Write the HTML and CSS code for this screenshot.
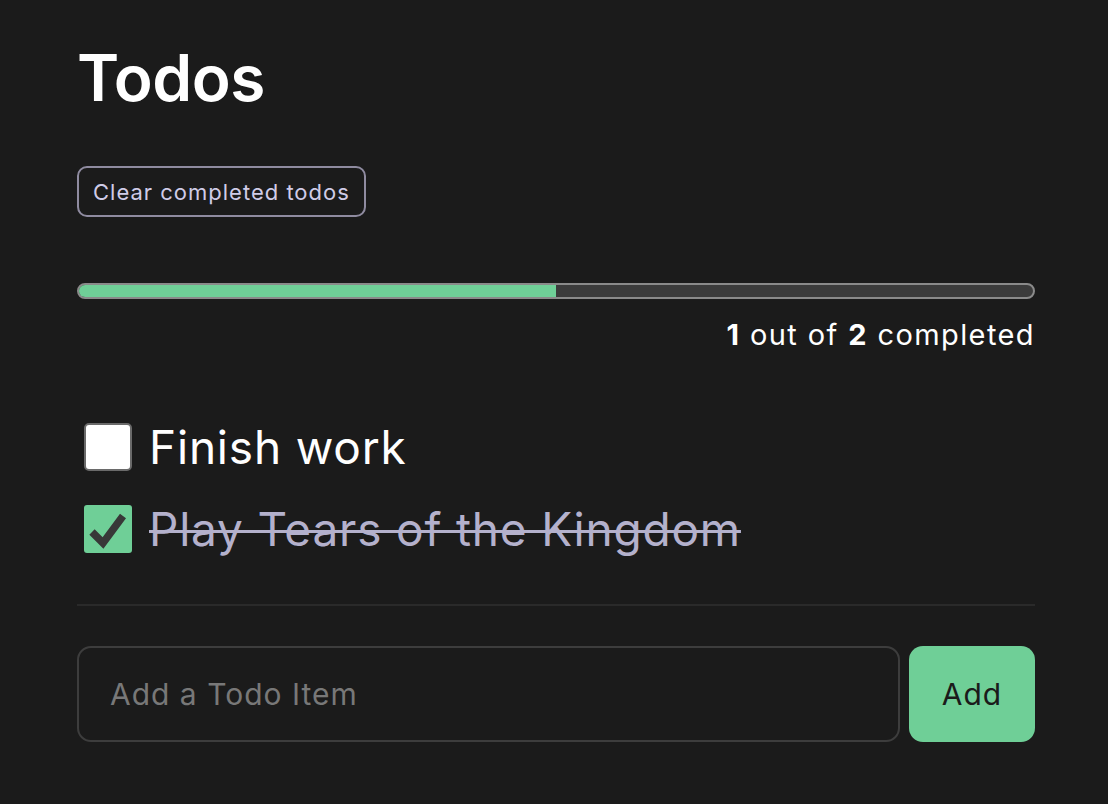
FILE: index.html
```html
<!DOCTYPE html>
<html lang="en">
<head>
<meta charset="utf-8">
<title>Todos</title>
<link rel="stylesheet" href="styles.css">
</head>
<body>
<main class="app">
  <h1 class="title">Todos</h1>
  <button class="clear-btn" type="button">Clear completed todos</button>
  <div class="progress"><div class="progress-fill" style="width: 50%"></div></div>
  <p class="stats"><b>1</b> out of <b>2</b> completed</p>
  <ul class="todo-list">
    <li class="todo">
      <span class="check"></span>
      <span class="todo-text">Finish work</span>
    </li>
    <li class="todo done">
      <span class="check checked">
        <svg viewBox="0 0 48 48" width="48" height="48"><path d="M8 27 L19 38 L39 11" fill="none" stroke="#383838" stroke-width="7.5"/></svg>
      </span>
      <span class="todo-text">Play Tears of the Kingdom</span>
    </li>
  </ul>
  <hr class="divider">
  <form class="add-form">
    <input class="add-input" type="text" placeholder="Add a Todo Item">
    <button class="add-btn" type="button">Add</button>
  </form>
</main>
</body>
</html>
```
FILE: styles.css
```css
* { box-sizing: border-box; }
html, body { margin: 0; padding: 0; }
body {
  background: #1b1b1b;
  color: #ffffff;
  font-family: Inter, "Noto Sans", "Liberation Sans", sans-serif;
}
.app {
  width: 958px;
  margin-left: 77px;
  padding-top: 40px;
  display: flex;
  flex-direction: column;
}
.title {
  margin: 0;
  font-size: 64px;
  font-weight: 600;
  line-height: 76px;
  letter-spacing: -0.5px;
}
.clear-btn {
  align-self: flex-start;
  margin-top: 50px;
  height: 51px;
  padding: 0 14px;
  background: transparent;
  border: 2px solid #8f8ba0;
  border-radius: 10px;
  color: #d0cce8;
  font-family: inherit;
  font-size: 22px;
  letter-spacing: 1px;
}
.progress {
  margin-top: 66px;
  height: 16px;
  border: 2px solid #8a8a8a;
  border-radius: 8px;
  background: #3b3b3b;
  overflow: hidden;
}
.progress-fill {
  height: 100%;
  background: #6fcf97;
}
.stats {
  margin: 17px 0 0;
  text-align: right;
  font-size: 29px;
  line-height: 38px;
  letter-spacing: 1.4px;
}
.stats b { font-weight: 700; }
.todo-list {
  list-style: none;
  margin: 69px 0 0;
  padding: 0 0 0 7px;
  display: flex;
  flex-direction: column;
  gap: 34px;
}
.todo {
  display: flex;
  align-items: center;
  gap: 17px;
  height: 48px;
}
.check {
  width: 48px;
  height: 48px;
  flex: none;
  background: #ffffff;
  border: 2px solid #6a6a6a;
  border-radius: 5px;
}
.check.checked {
  background: #6fcf97;
  border: none;
  border-radius: 3px;
}
.check svg { display: block; }
.todo-text {
  font-size: 46px;
  line-height: 56px;
  letter-spacing: 0.8px;
}
.done .todo-text {
  color: #b4b1cc;
  text-decoration: line-through;
  text-decoration-thickness: 3px;
}
.divider {
  margin: 51px 0 0;
  border: none;
  height: 2px;
  background: #2a2a2a;
}
.add-form {
  margin-top: 40px;
  display: flex;
  gap: 9px;
  height: 96px;
}
.add-input {
  flex: 1;
  height: 96px;
  background: transparent;
  border: 2px solid #3d3d3d;
  border-radius: 14px;
  padding: 0 31px;
  color: #ffffff;
  font-family: inherit;
  font-size: 30px;
  letter-spacing: 1px;
}
.add-input::placeholder { color: #787878; }
.add-btn {
  width: 126px;
  height: 96px;
  background: #6fcf97;
  border: none;
  border-radius: 14px;
  color: #1b1b1b;
  font-family: inherit;
  font-size: 30px;
  letter-spacing: 1px;
}
```
